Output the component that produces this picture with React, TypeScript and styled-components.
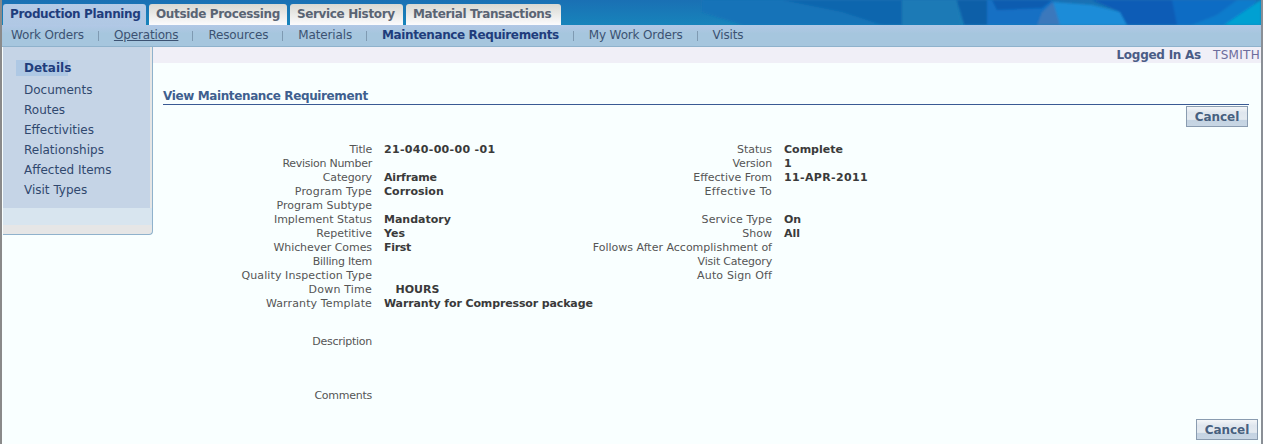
import React from "react";
import styled, { createGlobalStyle } from "styled-components";

const Global = createGlobalStyle`
  html, body { margin: 0; padding: 0; background: #f9ffff; }
  body { font-family: "DejaVu Sans", "Liberation Sans", sans-serif; font-size: 11px; color: #4a4a4a; }
`;
const Page = styled.div`
  width: 1263px; height: 444px; box-sizing: border-box; overflow: hidden;
  border-left: 2px solid #8a8a8a; border-right: 2px solid #8a8f96;
  background: #f9ffff; display: flex; flex-direction: column;
`;
const Banner = styled.div`
  position: relative; overflow: hidden;
  height: 25px; flex: none; display: flex; align-items: flex-end; padding-left: 1px;
  background: linear-gradient(#1a70b4, #1784bb);
`;
const BannerArt = styled.svg`position: absolute; left: 0; top: 0; width: 1259px; height: 25px;`;
const Tab = styled.div<{ $on?: boolean; $w: number }>`
  position: relative;
  width: ${p => p.$w}px; height: 21px; box-sizing: border-box; margin-right: 3px; padding: 3px 0 0 7px;
  border-radius: 3px 3px 0 0; font-weight: bold; font-size: 12px; white-space: nowrap; line-height: 15px;
  letter-spacing: -0.36px;
  color: ${p => (p.$on ? "#1f3d7c" : "#5a6474")};
  background: ${p => (p.$on ? "linear-gradient(#b4cae6, #b0c8e4)" : "linear-gradient(#d8d8d2, #ececea 55%, #fbfbfd)")};
`;
const SubNav = styled.div`
  height: 22px; flex: none; box-sizing: border-box; display: flex; align-items: center; padding: 0 0 2px 9px;
  background: linear-gradient(#b2c8e6, #a6c6de 40%); border-bottom: 1px solid #8fb2cc; font-size: 12px;
`;
const NavItem = styled.span<{ $on?: boolean; $link?: boolean }>`
  color: ${p => (p.$on ? "#1f3d7c" : "#3c5272")}; font-weight: ${p => (p.$on ? "bold" : "normal")};
  letter-spacing: ${p => (p.$on ? "-0.38px" : "-0.15px")};
  text-decoration: ${p => (p.$link ? "underline" : "none")}; white-space: nowrap;
`;
const NavSep = styled.span`
  width: 1px; height: 10px; background: #7f9ab2; margin: 2px 15px 0 14px; flex: none;
`;
const Body = styled.div`flex: 1; display: flex; min-height: 0;`;
const Side = styled.div`
  width: 150px; height: 188px; margin-left: 1px; flex: none; box-sizing: border-box; display: flex; flex-direction: column;
  background: #e6e6e6; border: solid #8fb2cc; border-width: 0 1px 1px 0; border-radius: 0 0 4px 0;
`;
const SideList = styled.div`
  height: 161px; box-sizing: border-box; background: #c5d4e6; padding: 13px 0 0 13px; display: flex; flex-direction: column; margin-right: 2px;
`;
const SideItem = styled.div<{ $on?: boolean }>`
  height: 20px; line-height: 16px; font-size: 12px; color: #30486e; padding-left: 8px;
  ${p => p.$on && `font-weight: bold; color: #1f3d7c; background: linear-gradient(#aec8e4, #aec8e4) left top / 52px 16px no-repeat; margin-bottom: 2px;`}
`;
const SideFoot = styled.div`height: 17px; background: #d8e5ef;`;
const Main = styled.div`flex: 1; min-width: 0; display: flex; flex-direction: column;`;
const UserBar = styled.div`
  height: 16px; flex: none; background: #f0eff7; display: flex; justify-content: flex-end; align-items: center;
  gap: 12px; font-size: 12px; padding-right: 1px;
`;
const UserLabel = styled.span`font-weight: bold; color: #4a5c86; letter-spacing: -0.25px;`;
const UserName = styled.span`color: #6c6c9c; letter-spacing: 0.3px;`;
const Heading = styled.div`
  margin: 26px 12px 0 10px; height: 15px; border-bottom: 1px solid #3a5a94;
  font-weight: bold; font-size: 12px; color: #3f5f8f; line-height: 15px; letter-spacing: -0.38px;
`;
const Actions = styled.div<{ $bottom?: boolean }>`
  display: flex; justify-content: flex-end; padding-right: ${p => (p.$bottom ? "3px" : "13px")};
  margin-top: ${p => (p.$bottom ? "auto" : "1px")}; margin-bottom: ${p => (p.$bottom ? "4px" : "0")};
`;
const Cancel = styled.button`
  width: 62px; height: 21px; padding: 0; font: bold 12px "DejaVu Sans", sans-serif; color: #47607f; letter-spacing: -0.05px;
  border: 1px solid #8a9cb0; background: linear-gradient(#f4f6f8, #dfe6ee 30%, #e4eaf0 65%, #c4d3e2 70%, #c8d6e4);
`;
const Columns = styled.div`display: flex; margin-top: 16px;`;
const Col = styled.div`
  width: 400px; flex: none; display: grid; grid-template-columns: 219px 1fr; column-gap: 12px;
  align-content: start; font-size: 11px; line-height: 14px;
`;
const Label = styled.div<{ $ls?: number }>`
  text-align: right; color: #555; white-space: nowrap; font-size: 11px; line-height: 14px;
  letter-spacing: ${p => p.$ls ?? 0}px;
`;
const Value = styled.div<{ $ls?: number }>`
  font-weight: bold; color: #3a3a3a; white-space: nowrap; min-height: 14px;
  letter-spacing: ${p => p.$ls ?? 0}px;
`;
const TextRows = styled.div`display: grid; grid-template-columns: 219px; row-gap: 40px; margin-top: 24px;`;

type Row = [string, string, number?, number?];
const left: Row[] = [
  ["Title", "21-040-00-00 -01", 0.32, -0.2], ["Revision Number", "", 0, -0.27], ["Category", "Airframe", -0.2, -0.12], ["Program Type", "Corrosion", 0, 0.17],
  ["Program Subtype", ""], ["Implement Status", "Mandatory"], ["Repetitive", "Yes"], ["Whichever Comes", "First", -0.3, -0.07],
  ["Billing Item", "", 0, -0.25], ["Quality Inspection Type", "", 0, 0.09], ["Down Time", "\u00a0\u00a0\u00a0HOURS", 0, 0.2], ["Warranty Template", "Warranty for Compressor package", -0.13, 0.12],
];
const right: Row[] = [
  ["Status", "Complete"], ["Version", "1", 0, -0.14], ["Effective From", "11-APR-2011", 0.36], ["Effective To", "", 0, 0.36], ["", ""],
  ["Service Type", "On", 0, 0.08], ["Show", "All"], ["Follows After Accomplishment of", ""], ["Visit Category", "", 0, -0.2], ["Auto Sign Off", "", 0, 0.15],
];
const tabs: [string, number][] = [["Production Planning", 143], ["Outside Processing", 138], ["Service History", 113], ["Material Transactions", 155]];
const nav = ["Work Orders", "Operations", "Resources", "Materials", "Maintenance Requirements", "My Work Orders", "Visits"];
const side = ["Details", "Documents", "Routes", "Effectivities", "Relationships", "Affected Items", "Visit Types"];
const art: [string, string][] = [
  ["#1673b8", "700,0 860,0 880,25 740,25 700,12"],
  ["#0d66ae", "780,0 960,0 948,25 880,25 840,12"],
  ["#1a7ab6", "900,0 955,0 960,25 900,25"],
  ["#0b5ea8", "955,0 990,0 985,25 962,25"],
  ["#1270c4", "985,0 1050,0 1060,25 985,25"],
  ["#0d5cb0", "990,0 1050,0 1040,8 995,10"],
  ["#3a78bc", "1040,12 1051,2 1060,25 1035,25"],
  ["#1a8cd8", "1051,2 1090,5 1118,12 1125,25 1058,25"],
  ["#0a5cb6", "1090,0 1180,0 1180,25 1125,25 1118,12"],
  ["#0a6cc4", "1170,0 1235,0 1215,15 1190,25 1175,25"],
  ["#0a7ccc", "1235,0 1255,0 1238,25 1190,25 1215,15"],
  ["#03a0d2", "1259,0 1259,25 1222,25"],
];

const Pairs = ({ rows }: { rows: Row[] }) => (
  <>
    {rows.map(([l, v, ls, lls], i) => (
      <React.Fragment key={i}>
        <Label $ls={lls}>{l}</Label>
        <Value $ls={ls}>{v}</Value>
      </React.Fragment>
    ))}
  </>
);

export default function App() {
  return (
    <Page>
      <Global />
      <Banner>
        <BannerArt viewBox="0 0 1259 25" aria-hidden="true">
          <defs>
            <filter id="soft" x="-5%" y="-5%" width="110%" height="110%"><feGaussianBlur stdDeviation="1.2" /></filter>
          </defs>
          <g filter="url(#soft)">
            {art.map(([c, pts]) => <polygon key={pts} fill={c} points={pts} />)}
          </g>
        </BannerArt>
        {tabs.map(([t, w], i) => <Tab key={t} $on={i === 0} $w={w}>{t}</Tab>)}
      </Banner>
      <SubNav>
        {nav.map((n, i) => (
          <React.Fragment key={n}>
            {i > 0 && <NavSep />}
            <NavItem $on={i === 4} $link={i === 1}>{n}</NavItem>
          </React.Fragment>
        ))}
      </SubNav>
      <Body>
        <Side>
          <SideList>{side.map((s, i) => <SideItem key={s} $on={i === 0}>{s}</SideItem>)}</SideList>
          <SideFoot />
        </Side>
        <Main>
          <UserBar><UserLabel>Logged In As</UserLabel><UserName>TSMITH</UserName></UserBar>
          <Heading>View Maintenance Requirement</Heading>
          <Actions><Cancel>Cancel</Cancel></Actions>
          <Columns>
            <Col><Pairs rows={left} /></Col>
            <Col><Pairs rows={right} /></Col>
          </Columns>
          <TextRows><Label $ls={-0.27}>Description</Label><Label $ls={-0.25}>Comments</Label></TextRows>
          <Actions $bottom><Cancel>Cancel</Cancel></Actions>
        </Main>
      </Body>
    </Page>
  );
}
